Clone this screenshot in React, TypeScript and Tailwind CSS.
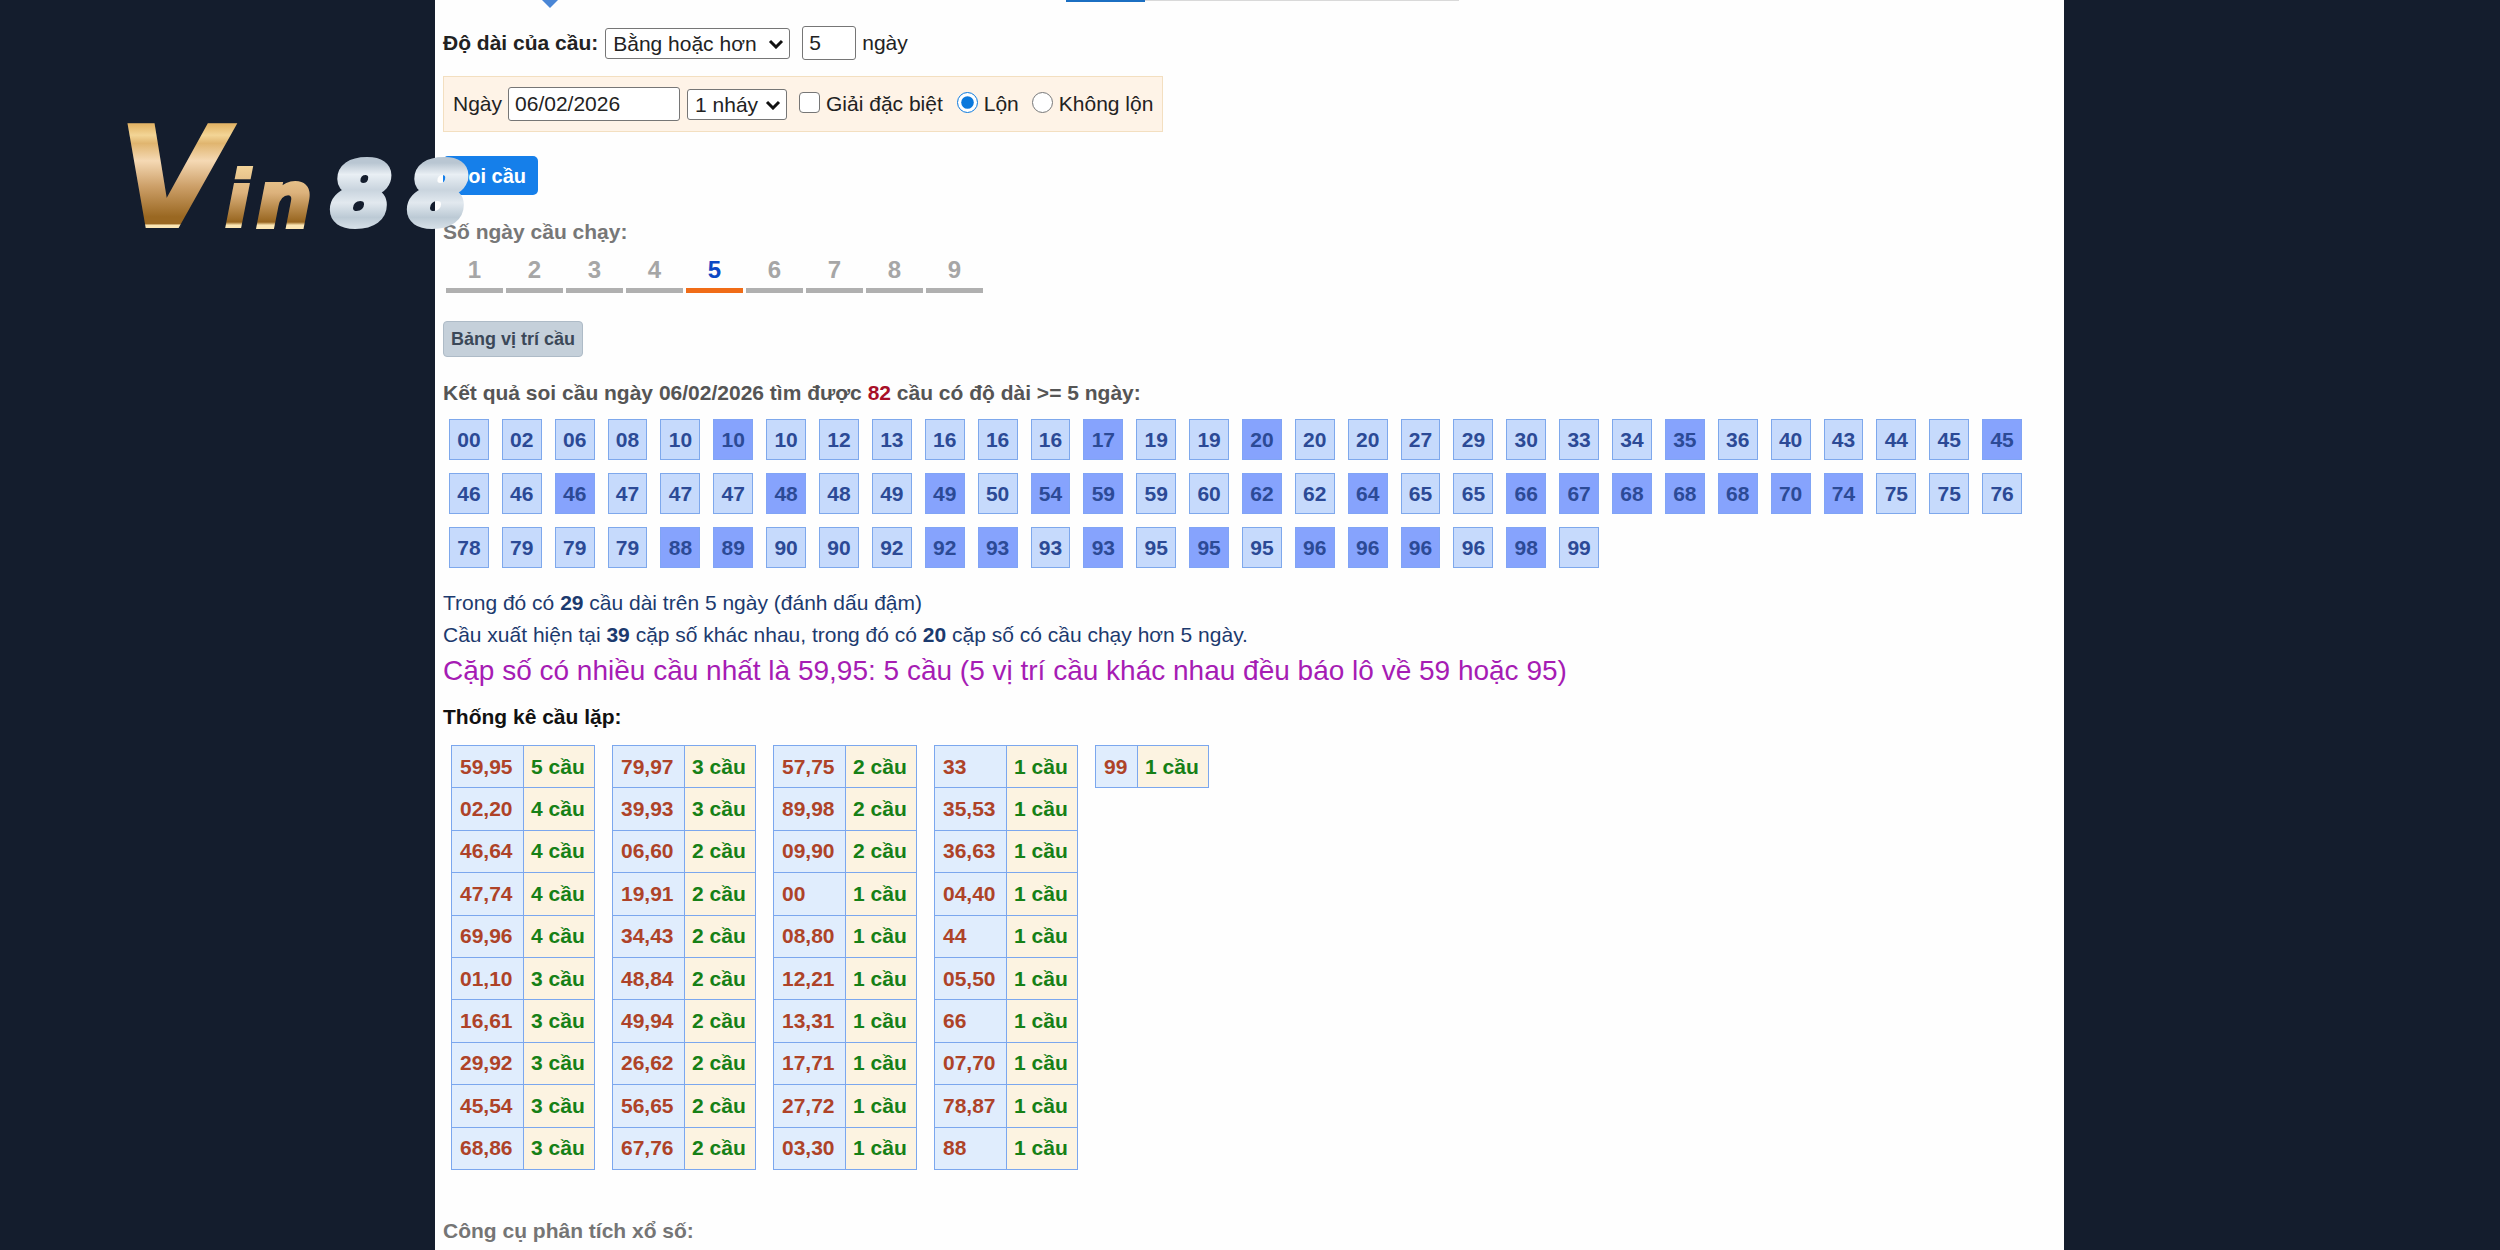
import React from "react";

const chips: string[] =
  ("00 02 06 08 10 10* 10 12 13 16 16 16 17* 19 19 20* 20 20 27 29 30 33 34 35* 36 40 43 44 45 45* " +
  "46 46 46* 47 47 47 48* 48 49 49* 50 54* 59* 59 60 62* 62 64* 65 65 66* 67* 68* 68* 68* 70* 74* 75 75 76 " +
  "78 79 79 79 88* 89* 90 90 92 92* 93* 93 93* 95 95* 95 96* 96* 96* 96 98* 99").split(" ");

const tables: [string, number][][] = [
  [["59,95", 5], ["02,20", 4], ["46,64", 4], ["47,74", 4], ["69,96", 4], ["01,10", 3], ["16,61", 3], ["29,92", 3], ["45,54", 3], ["68,86", 3]],
  [["79,97", 3], ["39,93", 3], ["06,60", 2], ["19,91", 2], ["34,43", 2], ["48,84", 2], ["49,94", 2], ["26,62", 2], ["56,65", 2], ["67,76", 2]],
  [["57,75", 2], ["89,98", 2], ["09,90", 2], ["00", 1], ["08,80", 1], ["12,21", 1], ["13,31", 1], ["17,71", 1], ["27,72", 1], ["03,30", 1]],
  [["33", 1], ["35,53", 1], ["36,63", 1], ["04,40", 1], ["44", 1], ["05,50", 1], ["66", 1], ["07,70", 1], ["78,87", 1], ["88", 1]],
  [["99", 1]],
];

function Select({ id, label, options, className }: { id: string; label: string; options: string[]; className: string }) {
  return (
    <span className="relative inline-flex">
      <select
        id={id}
        aria-label={label}
        className={`h-[31px] appearance-none rounded-[3px] border border-[#767676] bg-white pl-[7px] leading-[29px] ${className}`}
      >
        {options.map((o) => (
          <option key={o}>{o}</option>
        ))}
      </select>
      <svg viewBox="0 0 16 10" className="pointer-events-none absolute right-[6px] top-[11px] h-[10px] w-[16px]" fill="none">
        <path d="M2 2l6 6 6-6" stroke="#111" strokeWidth="3" />
      </svg>
    </span>
  );
}

function Logo() {
  return (
    <svg
      viewBox="0 0 420 190"
      role="img"
      aria-label="Vin88"
      className="pointer-events-none absolute left-[90px] top-[85px] h-[190px] w-[420px]"
      fontFamily="'DejaVu Sans', sans-serif"
      fontWeight="700"
      fontStyle="italic"
    >
      <defs>
        <linearGradient id="gold" gradientUnits="userSpaceOnUse" x1="0" y1="40" x2="0" y2="142">
          <stop offset="0" stopColor="#e3b568" />
          <stop offset="0.1" stopColor="#f3d596" />
          <stop offset="0.18" stopColor="#e0b56f" />
          <stop offset="0.35" stopColor="#f5d9b4" />
          <stop offset="0.6" stopColor="#cda069" />
          <stop offset="0.9" stopColor="#9a6822" />
          <stop offset="0.97" stopColor="#9a6822" />
          <stop offset="0.98" stopColor="#fbe6b4" />
        </linearGradient>
        <linearGradient id="goldSmall" gradientUnits="userSpaceOnUse" x1="0" y1="80" x2="0" y2="142">
          <stop offset="0" stopColor="#f3d49a" />
          <stop offset="0.45" stopColor="#dcb27c" />
          <stop offset="0.92" stopColor="#97651f" />
          <stop offset="0.97" stopColor="#fbe6b4" />
        </linearGradient>
        <linearGradient id="silver" gradientUnits="userSpaceOnUse" x1="0" y1="78" x2="0" y2="142">
          <stop offset="0" stopColor="#b9c6d2" />
          <stop offset="0.18" stopColor="#e9eff4" />
          <stop offset="0.42" stopColor="#c9d4de" />
          <stop offset="0.62" stopColor="#e2e9ef" />
          <stop offset="0.85" stopColor="#bccad5" />
          <stop offset="1" stopColor="#d3dde5" />
        </linearGradient>
      </defs>
      <text y="142">
        <tspan x="28" fontSize="140" fill="url(#gold)" stroke="url(#gold)" strokeWidth="2">V</tspan>
        <tspan x="134" fontSize="79" fill="url(#goldSmall)" stroke="url(#goldSmall)" strokeWidth="2">i</tspan>
        <tspan x="166" fontSize="79" fill="url(#goldSmall)" stroke="url(#goldSmall)" strokeWidth="4">n</tspan>
        <tspan x="242" y="139" fontSize="84" fill="url(#silver)" stroke="url(#silver)" strokeWidth="8">8</tspan>
        <tspan x="319" y="139" fontSize="84" fill="url(#silver)" stroke="url(#silver)" strokeWidth="8">8</tspan>
      </text>
    </svg>
  );
}

export default function App() {
  return (
    <div className="relative min-h-screen overflow-hidden bg-[#141d2d] font-['Liberation_Sans',Arial,sans-serif] text-[21px] leading-8 text-[#222]">
      <main className="relative ml-[17.4%] mr-[17.44%] min-h-screen bg-[#fefefe] pl-[8px]">
        <svg viewBox="0 0 20 8" className="absolute left-[105px] top-0 h-[8px] w-[20px]">
          <path d="M2 0h16l-8 8z" fill="#4a86d6" />
        </svg>
        <div className="absolute left-[631px] top-0 flex w-[393px]">
          <div className="h-[2px] w-1/5 bg-[#1b6fc2]" />
          <div className="h-px flex-1 bg-[#d9d9d9]" />
        </div>

        <form onSubmit={(e) => e.preventDefault()}>
          <div className="flex items-center pt-[26px]">
            <label htmlFor="compare" className="mr-[7px] font-bold">Độ dài của cầu:</label>
            <Select id="compare" label="So sánh độ dài" options={["Bằng hoặc hơn", "Bằng"]} className="w-[185px]" />
            <input
              id="length"
              aria-label="Số ngày"
              defaultValue="5"
              className="ml-3 h-[34px] w-[54px] rounded-[3px] border border-[#767676] bg-white px-[6px]"
            />
            <label htmlFor="length" className="ml-[6px]">ngày</label>
          </div>

          <div className="mt-4 flex h-14 w-fit items-center border border-[#f3dfc0] bg-[#fef3e7] px-[9px]">
            <label htmlFor="date" className="mr-[6px]">Ngày</label>
            <input
              id="date"
              defaultValue="06/02/2026"
              className="mr-[7px] h-[34px] w-[172px] rounded-[3px] border border-[#767676] bg-white px-[6px]"
            />
            <Select id="hits" label="Số nháy" options={["1 nháy", "2 nháy"]} className="w-[100px]" />
            <input id="special" type="checkbox" className="ml-3 mb-1 h-[21px] w-[21px] appearance-none rounded-[4px] border border-[#767676] bg-white checked:bg-[#0a78dc]" />
            <label htmlFor="special" className="ml-[6px]">Giải đặc biệt</label>
            <input id="mixed" name="mix" type="radio" defaultChecked className="ml-[14px] mb-1 h-[21px] w-[21px] accent-[#0a78dc]" />
            <label htmlFor="mixed" className="ml-[6px]">Lộn</label>
            <input id="unmixed" name="mix" type="radio" className="ml-[13px] mb-1 h-[21px] w-[21px] accent-[#0a78dc]" />
            <label htmlFor="unmixed" className="ml-[6px]">Không lộn</label>
          </div>

          <button type="submit" className="mt-6 block h-[39px] w-[95px] rounded-[5px] bg-[#157fea] text-[20px] font-bold leading-none text-white">
            Soi cầu
          </button>
        </form>

        <p className="mt-[21px] font-bold text-[#777]">Số ngày cầu chạy:</p>
        <nav className="ml-[3px] flex gap-[3px]">
          {[1, 2, 3, 4, 5, 6, 7, 8, 9].map((n) => (
            <a
              key={n}
              href={`#${n}`}
              className={`h-[45px] w-[57px] border-b-[5px] pt-[6px] text-center text-[24px] font-bold leading-8 ${
                n === 5 ? "border-[#f06c17] text-[#0b48c4]" : "border-[#b0b0b0] text-[#a6a6a6]"
              }`}
            >
              {n}
            </a>
          ))}
        </nav>

        <button type="button" className="mt-7 block h-[36px] w-[140px] rounded-[4px] border border-[#aebbc7] bg-[#c5d0da] text-[18px] font-bold leading-none text-[#3b4858]">
          Bảng vị trí cầu
        </button>

        <h2 className="mt-5 font-bold text-[#555]">
          Kết quả soi cầu ngày 06/02/2026 tìm được <span className="text-[#a80f28]">82</span> cầu có độ dài &gt;= 5 ngày:
        </h2>

        <div className="ml-[6px] mr-[42px] mt-[10px] grid grid-cols-[repeat(30,minmax(0,1fr))] gap-x-[13px] gap-y-[13px]">
          {chips.map((c, i) => (
            <a
              key={i}
              href={`#c${i}`}
              className={`flex h-[41px] items-center justify-center border font-bold text-[#2c4a96] ${
                c.endsWith("*") ? "border-[#80a4f5] bg-[#86a3fd]" : "border-[#7ea8ec] bg-[#c6dafc]"
              }`}
            >
              {c.slice(0, 2)}
            </a>
          ))}
        </div>

        <div className="mt-[19px] text-[#1c3a6e]">
          <p>Trong đó có <b>29</b> cầu dài trên 5 ngày (đánh dấu đậm)</p>
          <p>Cầu xuất hiện tại <b>39</b> cặp số khác nhau, trong đó có <b>20</b> cặp số có cầu chạy hơn 5 ngày.</p>
        </div>
        <p className="mt-1 text-[28px] text-[#a61cb4]">
          Cặp số có nhiều cầu nhất là 59,95: 5 cầu (5 vị trí cầu khác nhau đều báo lô về 59 hoặc 95)
        </p>
        <h3 className="mt-[14px] font-bold text-[#111]">Thống kê cầu lặp:</h3>

        <div className="ml-2 mt-3 flex items-start gap-[17px]">
          {tables.map((rows, t) => (
            <table key={t} className={`border-collapse font-bold ${rows.length > 1 ? "h-[425px]" : "h-[43px]"}`}>
              <tbody>
                {rows.map(([pair, count]) => (
                  <tr key={pair}>
                    <td className={`border border-[#7ba7ee] bg-[#e0edfd] px-2 ${rows.length > 1 ? "w-[72px]" : "w-[42px]"} text-[#ae4328]`}>{pair}</td>
                    <td className="w-[71px] whitespace-nowrap border border-[#7ba7ee] bg-[#fcf3e1] px-[7px] text-[#168016]">{count} cầu</td>
                  </tr>
                ))}
              </tbody>
            </table>
          ))}
        </div>

        <p className="mt-[45px] font-bold text-[#757575]">Công cụ phân tích xổ số:</p>
      </main>
      <Logo />
    </div>
  );
}
